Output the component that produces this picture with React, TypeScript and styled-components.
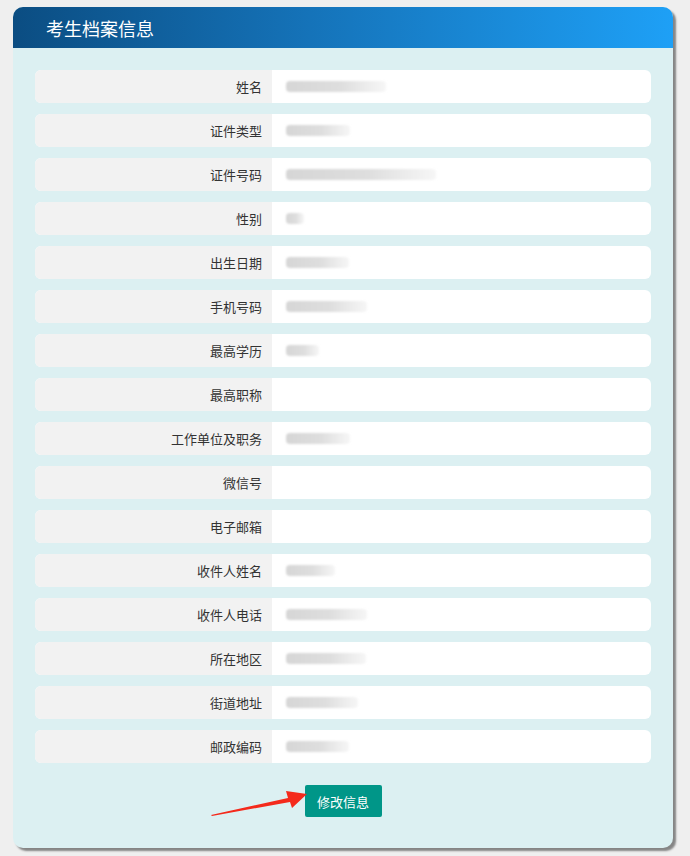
import React from 'react';
import styled, { createGlobalStyle } from 'styled-components';

const GlobalStyle = createGlobalStyle`
  html, body {
    margin: 0;
    padding: 0;
    background: #efefef;
    font-family: "Noto Sans CJK SC", "Liberation Sans", sans-serif;
  }
`;

const Page = styled.div`
  width: 690px;
  height: 856px;
  padding: 7px 0 0 13px;
  box-sizing: border-box;
`;

const Card = styled.div`
  width: 660px;
  height: 841px;
  border-radius: 10px;
  background: #dcf0f2;
  box-shadow: 3px 3px 2px #858585;
  overflow: hidden;
  display: flex;
  flex-direction: column;
`;

const Header = styled.div`
  height: 41px;
  display: flex;
  align-items: center;
  padding-left: 33px;
  background: linear-gradient(to right, #0b4d82 0%, #1573b9 45%, #1ea0f6 100%);
  color: #fff;
  font-size: 18px;
`;

const Body = styled.div`
  position: relative;
  padding: 22px 22px 0 22px;
  display: flex;
  flex-direction: column;
  gap: 11px;
`;

const Row = styled.div`
  display: flex;
  height: 33px;
  border-radius: 6px;
  overflow: hidden;
  background: #fff;
`;

const Label = styled.div`
  width: 237px;
  flex-shrink: 0;
  background: #f2f2f2;
  box-sizing: border-box;
  padding-right: 10px;
  display: flex;
  align-items: center;
  justify-content: flex-end;
  font-size: 13px;
  color: #333;
`;

const Value = styled.div`
  flex: 1;
  display: flex;
  align-items: center;
  padding-left: 14px;
`;

const Blur = styled.div<{ $w: number }>`
  width: ${(p) => p.$w}px;
  height: 11px;
  border-radius: 4px;
  background: linear-gradient(to right, #d6d6d6 0%, #dedede 55%, #ececec 80%, #f6f6f6 100%);
  filter: blur(1px);
`;

const Actions = styled.div`
  display: flex;
  justify-content: center;
  padding-top: 11px;
`;

const Button = styled.button`
  width: 77px;
  height: 32px;
  border: none;
  border-radius: 2px;
  background: #009688;
  color: #fff;
  font-family: inherit;
  font-size: 13px;
  cursor: pointer;
`;

const Arrow = styled.svg`
  position: absolute;
  left: 198px;
  bottom: -1px;
`;

const fields: { label: string; w: number }[] = [
  { label: '姓名', w: 100 },
  { label: '证件类型', w: 64 },
  { label: '证件号码', w: 150 },
  { label: '性别', w: 18 },
  { label: '出生日期', w: 63 },
  { label: '手机号码', w: 81 },
  { label: '最高学历', w: 33 },
  { label: '最高职称', w: 0 },
  { label: '工作单位及职务', w: 64 },
  { label: '微信号', w: 0 },
  { label: '电子邮箱', w: 0 },
  { label: '收件人姓名', w: 49 },
  { label: '收件人电话', w: 81 },
  { label: '所在地区', w: 80 },
  { label: '街道地址', w: 72 },
  { label: '邮政编码', w: 63 },
];

export default function App() {
  return (
    <>
      <GlobalStyle />
      <Page>
        <Card>
          <Header>考生档案信息</Header>
          <Body>
            {fields.map((f) => (
              <Row key={f.label}>
                <Label>{f.label}</Label>
                <Value>{f.w > 0 && <Blur $w={f.w} />}</Value>
              </Row>
            ))}
            <Actions>
              <Button>修改信息</Button>
            </Actions>
            <Arrow width="100" height="30" viewBox="0 0 100 30">
              <path d="M0 27 L77 10 L75 3 L96 6 L81 20 L79 14 L1 28 Z" fill="#f42a1c" />
            </Arrow>
          </Body>
        </Card>
      </Page>
    </>
  );
}
